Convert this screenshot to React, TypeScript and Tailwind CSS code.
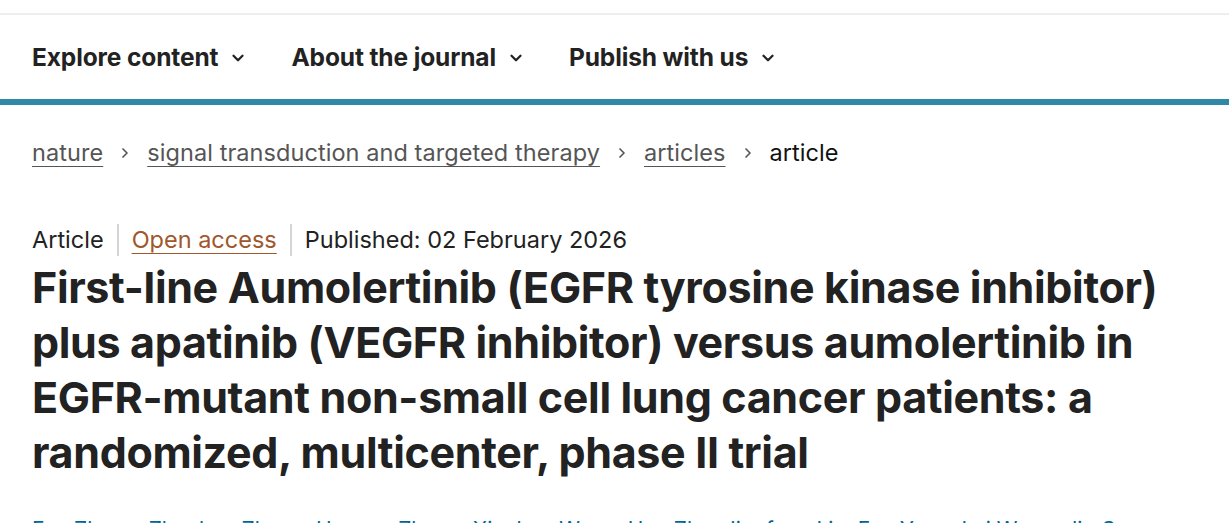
import { ChevronDown, ChevronRight } from 'lucide-react'

const font = { fontFamily: 'Inter, "Liberation Sans", sans-serif' }

function NavItem({ label }: { label: string }) {
  return (
    <button className="flex items-center gap-[11px] text-[24.5px] font-bold text-[#222] tracking-[-0.005em]">
      {label}
      <ChevronDown size={18} strokeWidth={3} className="mt-[2px]" />
    </button>
  )
}

function Crumb({ label }: { label: string }) {
  return (
    <>
      <a className="underline underline-offset-[5px] decoration-1 text-[#555]">{label}</a>
      <ChevronRight size={16} strokeWidth={2.5} className="text-[#555] mx-[14px]" />
    </>
  )
}

export default function App() {
  return (
    <div className="min-h-screen bg-white overflow-hidden" style={font}>
      <div className="h-[13px]" />
      <div className="h-[2px] bg-[#eeeeee]" />
      <nav className="h-[84px] flex items-center gap-[44px] px-[32px]">
        <NavItem label="Explore content" />
        <NavItem label="About the journal" />
        <NavItem label="Publish with us" />
      </nav>
      <div className="h-[6px] bg-[#2f88a6]" />

      <div className="px-[32px]">
        <div className="flex items-center mt-[33px] text-[23.5px] tracking-[0.003em] h-[30px]">
          <Crumb label="nature" />
          <Crumb label="signal transduction and targeted therapy" />
          <Crumb label="articles" />
          <span className="text-[#111]">article</span>
        </div>

        <div className="flex items-center mt-[56px] text-[23.5px] text-[#222] h-[32px]">
          <span>Article</span>
          <span className="w-[2px] h-[32px] bg-[#d5d5d5] mx-[13px]" />
          <a className="underline underline-offset-[5px] decoration-1 text-[#a0572c]">Open access</a>
          <span className="w-[2px] h-[32px] bg-[#d5d5d5] mx-[13px]" />
          <span>Published: 02 February 2026</span>
        </div>

        <h1 className="mt-[4px] text-[43px] leading-[55px] font-bold text-[#222] tracking-[-0.008em] max-w-[1175px]">
          First-line Aumolertinib (EGFR tyrosine kinase inhibitor) plus apatinib (VEGFR inhibitor) versus aumolertinib in EGFR-mutant non-small cell lung cancer patients: a randomized, multicenter, phase II trial
        </h1>

        <div className="mt-[34px] text-[21px] text-[#006699] whitespace-nowrap">
          Fan Zhang, Zhenhua Zhang, Huanyu Zhang, Xiaohua Wang, Hao Zhu, Jingfang Liu, Fan Yang, Lei Wang, Jin Guo
        </div>
      </div>
    </div>
  )
}
